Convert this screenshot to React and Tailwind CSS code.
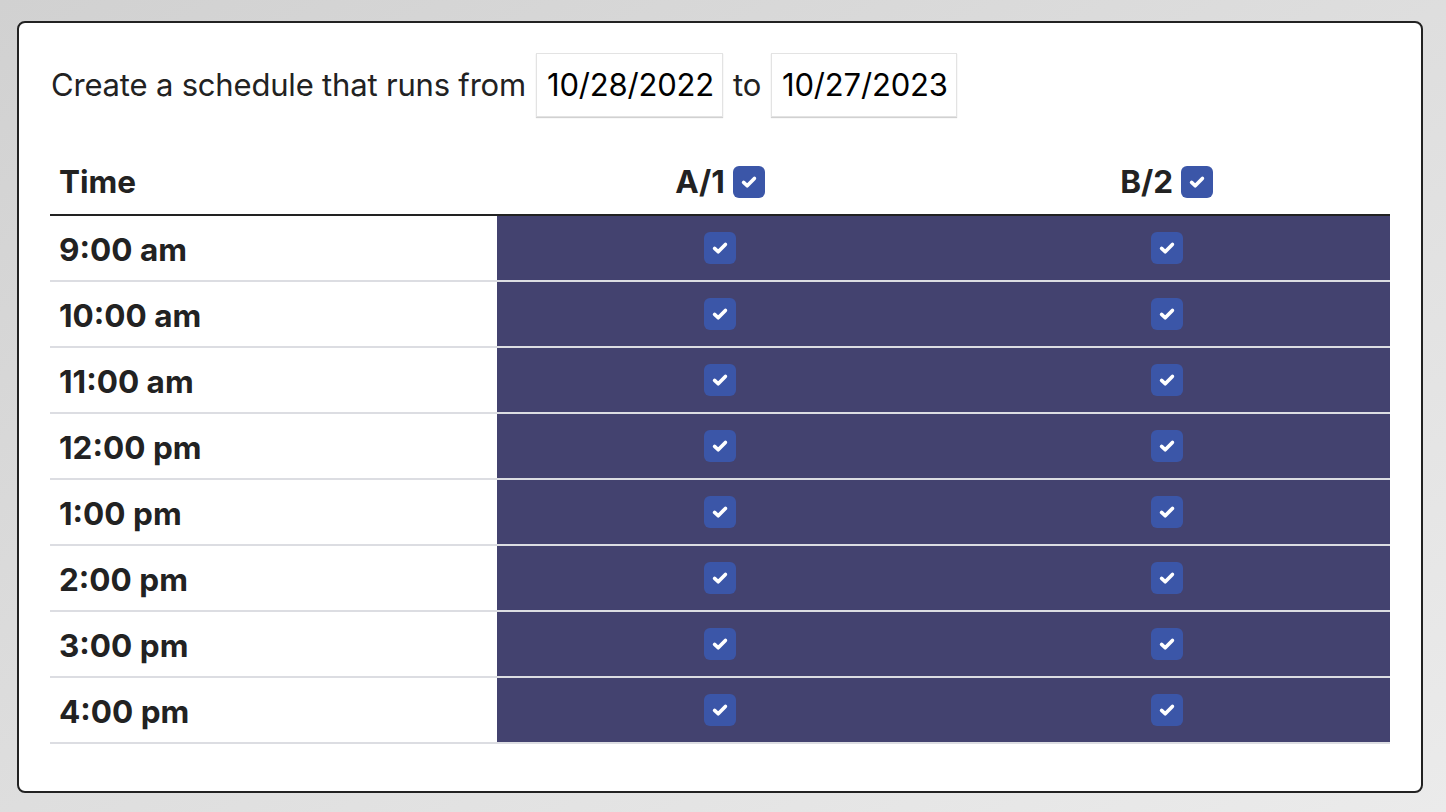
import React from 'react';

const times = ['9:00 am', '10:00 am', '11:00 am', '12:00 pm', '1:00 pm', '2:00 pm', '3:00 pm', '4:00 pm'];

const CheckBox = () => (
    <span className="inline-flex items-center justify-center w-[32px] h-[32px] rounded-[6px] bg-[#3b56a8]">
        <svg width="24" height="24" viewBox="0 0 16 16" fill="none">
            <path d="M4.4 8.3 L6.8 10.5 L11.6 5.6" stroke="white" strokeWidth="2.4" strokeLinecap="round" strokeLinejoin="round" />
        </svg>
    </span>
);

const DateBox = ({ value }) => (
    <div className="h-[64px] pl-[10px] pr-[8px] flex items-center border border-[#e3e3e3] shadow-[0_1px_1px_rgba(0,0,0,0.18)] text-black">
        {value}
    </div>
);

export default function App() {
    return (
        <div className="min-h-screen w-full bg-gradient-to-br from-[#d1d1d1] to-[#ebebeb] pt-[21px] pl-[17px] font-['Inter','Liberation_Sans',sans-serif]">
            <div className="w-[1406px] h-[772px] bg-white border-2 border-[#222] rounded-[8px] pt-[30px] px-[31px]">
                {/* date range */}
                <div className="flex items-center gap-[10px] text-[31px] tracking-[-0.006em] text-[#222] pl-[1px]">
                    <span>Create a schedule that runs from</span>
                    <DateBox value="10/28/2022" />
                    <span>to</span>
                    <DateBox value="10/27/2023" />
                </div>

                {/* schedule table */}
                <div className="mt-[32px] w-[1340px] text-[31.5px] font-bold text-[#222]">
                    <div className="grid grid-cols-3 h-[67px] border-b-2 border-[#222] items-center">
                        <div className="pl-[9px]">Time</div>
                        <div className="flex items-center justify-center gap-[8px]">
                            <span>A/1</span>
                            <CheckBox />
                        </div>
                        <div className="flex items-center justify-center gap-[8px]">
                            <span>B/2</span>
                            <CheckBox />
                        </div>
                    </div>
                    {times.map(t => (
                        <div key={t} className="grid grid-cols-3 h-[66px] border-b-2 border-[#dcdde2]">
                            <div className="pl-[9px] pt-[3px] flex items-center">{t}</div>
                            <div className="bg-[#43426f] flex items-center justify-center">
                                <CheckBox />
                            </div>
                            <div className="bg-[#43426f] flex items-center justify-center">
                                <CheckBox />
                            </div>
                        </div>
                    ))}
                </div>
            </div>
        </div>
    );
}
